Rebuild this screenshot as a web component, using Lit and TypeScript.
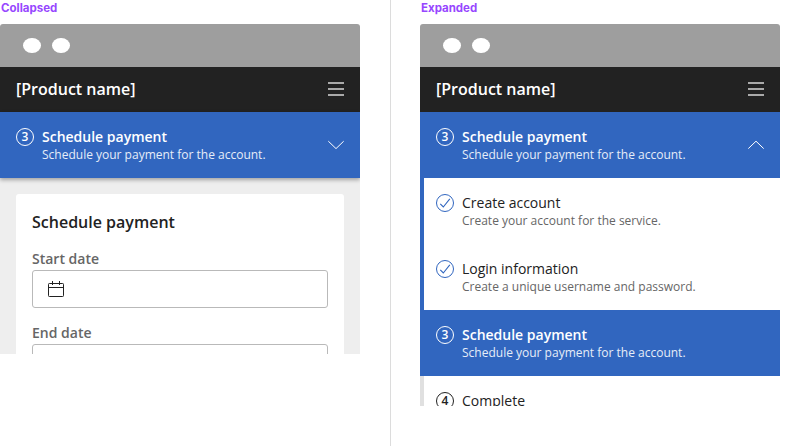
import { LitElement, html, css, svg, nothing } from "lit";
import { customElement, property } from "lit/decorators.js";

@customElement("step-row")
class StepRow extends LitElement {
  @property() number = "";
  @property() heading = "";
  @property() detail = "";
  @property() status = "current";
  @property() chevron = "";

  static styles = css`
    :host {
      display: block;
      flex: none;
      font-family: "Open Sans", sans-serif;
    }
    .row {
      box-sizing: border-box;
      display: flex;
      height: 66px;
      padding: 16px 16px 0 12px;
      border-left: 4px solid #3166bf;
      background: #fff;
      color: #222;
    }
    .current {
      background: #3166bf;
      color: #fff;
    }
    .upcoming {
      border-left-color: #e0e0e0;
    }
    .badge {
      flex: none;
      width: 18px;
      height: 18px;
      margin-right: 8px;
    }
    .done .badge {
      color: #3166bf;
    }
    .badge text {
      font-family: "Open Sans", sans-serif;
      font-size: 12px;
      font-weight: 600;
      text-anchor: middle;
      fill: currentColor;
    }
    .copy {
      flex: 1;
      white-space: nowrap;
    }
    .title {
      font-size: 14px;
      line-height: 18px;
    }
    .current .title {
      font-weight: 600;
    }
    .detail {
      font-size: 12px;
      line-height: 18px;
      color: #666;
    }
    .current .detail {
      color: #e6edf8;
    }
    .chevron {
      flex: none;
      width: 16px;
      height: 10px;
      margin-top: 12px;
    }
  `;

  render() {
    return html`
      <div class="row ${this.status}">
        <svg class="badge" viewBox="0 0 18 18" fill="none" stroke="currentColor">
          <circle cx="9" cy="9" r="8.5" stroke-width="1"></circle>
          ${this.status === "done"
            ? svg`<path d="M4.3 9.8 L7.3 13 L13.8 4.8" stroke-width="1.1"></path>`
            : svg`<text x="9" y="13.2" stroke="none">${this.number}</text>`}
        </svg>
        <div class="copy">
          <div class="title">${this.heading}</div>
          <div class="detail">${this.detail}</div>
        </div>
        ${this.chevron
          ? html`<svg class="chevron" viewBox="0 0 16 10" fill="none" stroke="#fff">
              <path d=${this.chevron === "down" ? "M0.3 1.2 L8 8.6 L15.7 1.2" : "M0.3 8.6 L8 1.2 L15.7 8.6"}></path>
            </svg>`
          : nothing}
      </div>
    `;
  }
}

@customElement("phone-frame")
class PhoneFrame extends LitElement {
  static styles = css`
    :host {
      display: flex;
      flex-direction: column;
      width: 360px;
      overflow: hidden;
      border-radius: 3px 3px 0 0;
      font-family: "Open Sans", sans-serif;
    }
    .chrome {
      flex: none;
      display: flex;
      align-items: center;
      gap: 11.5px;
      height: 43px;
      padding-left: 23px;
      background: #9e9e9e;
    }
    .dot {
      width: 17.5px;
      height: 15px;
      border-radius: 50%;
      background: #fff;
    }
    .bar {
      box-sizing: border-box;
      flex: none;
      display: flex;
      align-items: center;
      justify-content: space-between;
      height: 45px;
      padding: 0 16px 1px;
      background: #222;
      color: #fff;
      font-size: 16px;
      font-weight: 600;
    }
    .menu {
      display: flex;
      flex-direction: column;
      gap: 4px;
    }
    .line {
      width: 16px;
      height: 2px;
      background: #aaa;
    }
  `;

  render() {
    return html`
      <div class="chrome"><span class="dot"></span><span class="dot"></span></div>
      <div class="bar">
        <span>[Product name]</span>
        <div class="menu"><span class="line"></span><span class="line"></span><span class="line"></span></div>
      </div>
      <slot></slot>
    `;
  }
}

@customElement("app-root")
class AppRoot extends LitElement {
  static styles = css`
    :host {
      display: grid;
      grid-template-columns: 390px 1px 389px;
      height: 446px;
      overflow: hidden;
      background: #fff;
      font-family: "Open Sans", sans-serif;
    }
    .divider {
      background: #dcdcdc;
    }
    .expanded {
      padding-left: 29px;
    }
    .label {
      height: 24px;
      padding-left: 1px;
      font-family: Inter, sans-serif;
      font-size: 11.5px;
      font-weight: 700;
      line-height: 16px;
      color: #9747ff;
    }
    .short {
      height: 330px;
    }
    .tall {
      height: 382px;
    }
    .raised {
      position: relative;
      box-shadow: 0 2px 4px rgba(0, 0, 0, 0.32);
    }
    .page {
      flex: 1;
      min-height: 0;
      overflow: hidden;
      padding: 16px 16px 0;
      background: #eee;
    }
    .card {
      height: 200px;
      padding: 16px 16px 0;
      border-radius: 3px 3px 0 0;
      background: #fff;
    }
    .heading {
      font-size: 16px;
      font-weight: 600;
      line-height: 24px;
      color: #222;
    }
    .field {
      margin-top: 16px;
    }
    .name {
      font-size: 14px;
      font-weight: 600;
      line-height: 18px;
      color: #666;
    }
    .input {
      box-sizing: border-box;
      display: flex;
      align-items: center;
      height: 38px;
      margin-top: 2px;
      padding-left: 15px;
      border: 1px solid #b9b9b9;
      border-radius: 3px;
    }
    .calendar {
      width: 16px;
      height: 16px;
    }
  `;

  render() {
    return html`
      <section>
        <div class="label">Collapsed</div>
        <phone-frame class="short">
          <step-row class="raised" number="3" heading="Schedule payment"
            detail="Schedule your payment for the account." chevron="down"></step-row>
          <div class="page">
            <div class="card">
              <div class="heading">Schedule payment</div>
              <div class="field">
                <div class="name">Start date</div>
                <div class="input">
                  <svg class="calendar" viewBox="0 0 16 16" fill="none" stroke="#222">
                    <rect x="0.5" y="2.5" width="15" height="13" rx="0.8"></rect>
                    <path d="M0.5 6.5H15.5M4.5 0V4M11.5 0V4"></path>
                  </svg>
                </div>
              </div>
              <div class="field">
                <div class="name">End date</div>
                <div class="input"></div>
              </div>
            </div>
          </div>
        </phone-frame>
      </section>
      <div class="divider"></div>
      <section class="expanded">
        <div class="label">Expanded</div>
        <phone-frame class="tall">
          <step-row number="3" heading="Schedule payment"
            detail="Schedule your payment for the account." chevron="up"></step-row>
          <step-row status="done" heading="Create account" detail="Create your account for the service."></step-row>
          <step-row status="done" heading="Login information" detail="Create a unique username and password."></step-row>
          <step-row number="3" heading="Schedule payment" detail="Schedule your payment for the account."></step-row>
          <step-row status="upcoming" number="4" heading="Complete"></step-row>
        </phone-frame>
      </section>
    `;
  }
}
